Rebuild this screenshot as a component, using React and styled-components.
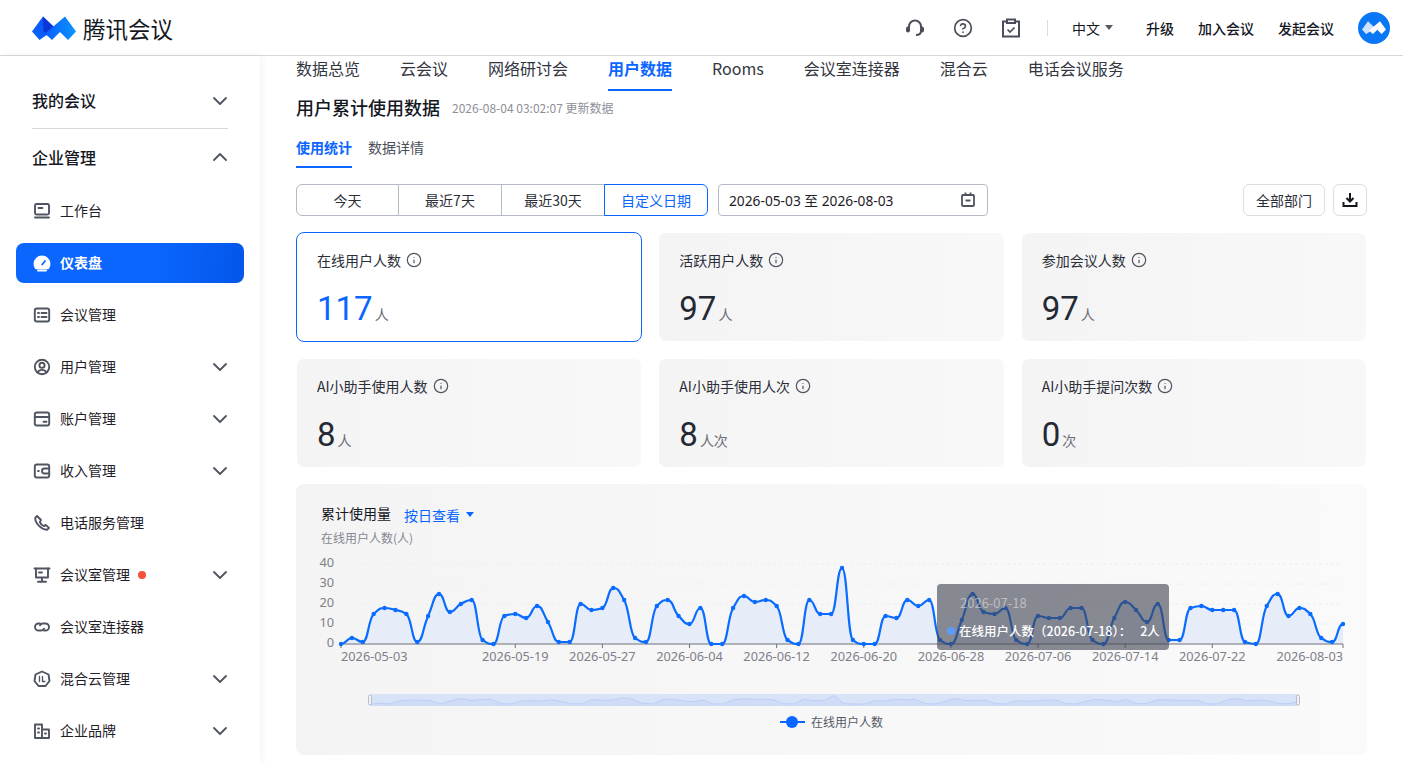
import React from "react";
import styled, { createGlobalStyle } from "styled-components";
import { ChevronDown, ChevronUp, CircleHelp, Info } from "lucide-react";

const GlobalStyle = createGlobalStyle`
  html, body { margin: 0; padding: 0; height: 100%; overflow: hidden; background: #fff; }
  body { font-family: "Noto Sans CJK SC", "Noto Sans", sans-serif; color: #15171f; }
  * { box-sizing: border-box; }
`;

const TOP_TABS = ["数据总览", "云会议", "网络研讨会", "用户数据", "Rooms", "会议室连接器", "混合云", "电话会议服务"];
const RANGES = ["今天", "最近7天", "最近30天", "自定义日期"];
const STATS = [
  { title: "在线用户人数", value: "117", unit: "人", active: true },
  { title: "活跃用户人数", value: "97", unit: "人" },
  { title: "参加会议人数", value: "97", unit: "人" },
  { title: "AI小助手使用人数", value: "8", unit: "人" },
  { title: "AI小助手使用人次", value: "8", unit: "人次" },
  { title: "AI小助手提问次数", value: "0", unit: "次" },
];
const MENU = [
  { icon: "desk", label: "工作台" },
  { icon: "gauge", label: "仪表盘", active: true },
  { icon: "list", label: "会议管理" },
  { icon: "user", label: "用户管理", more: true },
  { icon: "card", label: "账户管理", more: true },
  { icon: "wallet", label: "收入管理", more: true },
  { icon: "phone", label: "电话服务管理" },
  { icon: "room", label: "会议室管理", more: true, dot: true },
  { icon: "link", label: "会议室连接器" },
  { icon: "hybrid", label: "混合云管理", more: true },
  { icon: "brand", label: "企业品牌", more: true },
];

// daily values read off the chart, 05-03 to 08-03
const DATA = [
  0, 3, 1, 15, 18, 17, 15, 1, 14, 25, 16, 20, 22, 2, 0, 14, 15, 13, 19, 11, 1, 1, 20, 17, 18, 28, 22, 3, 1, 19, 22,
  14, 10, 18, 0, 0, 18, 24, 21, 22, 19, 2, 0, 22, 15, 15, 38, 2, 0, 0, 14, 13, 22, 19, 22, 2, 0, 12, 25, 16, 15, 18,
  2, 0, 14, 13, 13, 18, 18, 2, 0, 13, 21, 17, 11, 20, 2, 2, 18, 19, 17, 17, 17, 1, 0, 19, 25, 14, 18, 15, 3, 1, 10,
];
const X_TICKS = [
  [0, "2026-05-03"], [16, "2026-05-19"], [24, "2026-05-27"], [32, "2026-06-04"], [40, "2026-06-12"],
  [48, "2026-06-20"], [56, "2026-06-28"], [64, "2026-07-06"], [72, "2026-07-14"], [80, "2026-07-22"], [92, "2026-08-03"],
];

// monotone cubic through the points, so peaks stay on the data
function smoothPath(pts) {
  const slopes = pts.map((p, i) => {
    if (i === 0 || i === pts.length - 1) return 0;
    const a = (p[1] - pts[i - 1][1]) / (p[0] - pts[i - 1][0]);
    const b = (pts[i + 1][1] - p[1]) / (pts[i + 1][0] - p[0]);
    if (a * b <= 0) return 0;
    return (2 * a * b) / (a + b);
  });
  let d = `M${pts[0][0]} ${pts[0][1]}`;
  for (let i = 1; i < pts.length; i++) {
    const [x0, y0] = pts[i - 1];
    const [x1, y1] = pts[i];
    const h = (x1 - x0) / 2;
    d += `C${(x0 + h).toFixed(2)} ${(y0 + slopes[i - 1] * h).toFixed(2)} ${(x1 - h).toFixed(2)} ${(y1 - slopes[i] * h).toFixed(2)} ${x1.toFixed(2)} ${y1}`;
  }
  return d;
}

function Chart() {
  const left = 45;
  const step = 1002 / 92;
  const base = 103;
  const pts = DATA.map((v, i) => [left + i * step, base - v * 2]);
  const line = smoothPath(pts);
  return (
    <ChartSvg width="1071" height="126" viewBox="0 0 1071 126">
      {[10, 20, 30, 40].map((v) => (
        <line key={v} x1={left} x2={left + 1002} y1={base - v * 2} y2={base - v * 2} stroke="#eceef8" strokeDasharray="3 3" />
      ))}
      {[0, 10, 20, 30, 40].map((v) => (
        <text key={v} x="38" y={base - v * 2 + 3} textAnchor="end" fontSize="12.75" fill="#7e8088">{v}</text>
      ))}
      <path d={`${line}L${left + 1002} ${base}L${left} ${base}Z`} fill="#e6edf9" />
      <line x1={left} x2={left + 1002} y1={base} y2={base} stroke="#6e7079" />
      {X_TICKS.map(([d, label], i) => (
        <g key={label}>
          <line x1={left + d * step} x2={left + d * step} y1={base} y2={base + 4} stroke="#6e7079" />
          <text
            x={left + d * step}
            y={base + 17}
            textAnchor={i === 0 ? "start" : i === X_TICKS.length - 1 ? "end" : "middle"}
            fontSize="12.75"
            fill="#7e8088"
          >
            {label}
          </text>
        </g>
      ))}
      <path d={line} fill="none" stroke="#0a6cff" strokeWidth="2.2" />
      {pts.map((p, i) => (
        <circle key={i} cx={p[0]} cy={p[1]} r="2.2" fill="#0a6cff" />
      ))}
    </ChartSvg>
  );
}

function Brush() {
  const w = 928;
  const step = w / 92;
  const pts = DATA.map((v, i) => [i * step, 11 - v * 0.22]);
  const d = pts.map((p, i) => `${i ? "L" : "M"}${p[0].toFixed(1)} ${p[1].toFixed(1)}`).join("");
  return (
    <BrushSvg width="934" height="16" viewBox="-3 0 934 16">
      <rect x="0" y="1" width={w} height="12" fill="#d9e3f8" />
      <path d={`${d}L${w} 13L0 13Z`} fill="#cfdcf7" />
      <path d={d} fill="none" stroke="#bccff5" />
      <rect x="-1.5" y="2" width="3" height="10" rx="1.5" fill="#f0f2f7" stroke="#b9bdc8" />
      <rect x={w - 1.5} y="2" width="3" height="10" rx="1.5" fill="#f0f2f7" stroke="#b9bdc8" />
    </BrushSvg>
  );
}

const ICON_PATHS = {
  desk: <><rect x="3" y="3" width="14" height="10.5" rx="1.5" /><path d="M6.5 7h4M3 16.5h14" /></>,
  gauge: <><path d="M2.5 11a7.5 7.5 0 0 1 15 0c0 1.6-.5 3-1.3 4.2H3.8A7.6 7.6 0 0 1 2.5 11Z" fill="currentColor" /><path d="M10.2 11.5 13 8" stroke="#0a66ff" strokeWidth="1.8" /><path d="M6 17.5h8" /></>,
  list: <><rect x="2.8" y="3.5" width="14.4" height="13" rx="2" /><path d="M6 8h1M9.5 8h5M6 12h1M9.5 12h5" /></>,
  user: <><circle cx="10" cy="10" r="7.2" /><circle cx="10" cy="8.3" r="2.6" /><path d="M5.5 15.5c1-1.8 2.6-2.6 4.5-2.6s3.5.8 4.5 2.6" /></>,
  card: <><rect x="2.8" y="3.5" width="14.4" height="13" rx="2" /><path d="M3 8h14M11.5 12.8h3" /></>,
  wallet: <><rect x="2.8" y="3.5" width="14.4" height="13" rx="2" /><path d="M17 7.5h-4.5a2.5 2.5 0 0 0 0 5H17" /><path d="M6 10h.8" /></>,
  phone: <path d="M5 3 3.3 4.7c-.6 5.3 6.5 12.6 12 12l1.7-1.8-3.3-3-1.9 1.2c-1.7-.7-3.4-2.5-4-4.2L9 7 5 3Z" />,
  room: <><path d="M2.5 3.5h15" /><path d="M4 3.5v9h12v-9M10 12.5v4M6 16.8h8M7 7.5h3" /></>,
  link: <><path d="M8 6.5H6.5a3.5 3.5 0 0 0 0 7H9a3.5 3.5 0 0 0 3-1.8" /><path d="M12 13.5h1.500a3.5 3.5 0 0 0 0-7H11a3.5 3.5 0 0 0-3 1.8" /></>,
  hybrid: <><path d="M10 2.5 16.5 5.500 17.5 12 13.5 17H6.500L2.500 12 3.500 5.500 10 2.500Z" /><path d="M7.500 7.500v5M10.500 7.500v5h2.500" strokeWidth="1.3" /></>,
  brand: <><path d="M3 17V3.500h7V17H3ZM10 8.500h7V17h-7M6 7.500h1M6 11.500h1M13 12.500h1" /></>,
};

function MenuIcon({ name }) {
  return (
    <svg width="20" height="20" viewBox="0 0 20 20" fill="none" stroke="currentColor" strokeWidth="1.9" strokeLinejoin="round" strokeLinecap="round">
      {ICON_PATHS[name]}
    </svg>
  );
}

function Logo({ size = 44, plain }) {
  const h = (size * 24) / 44;
  return (
    <svg width={size} height={h} viewBox="0 0 44 24">
      <defs>
        <linearGradient id="lg-a" x1="0" y1="1" x2="1" y2="0">
          <stop offset="0" stopColor="#0a66ff" />
          <stop offset="1" stopColor="#0a4ef0" />
        </linearGradient>
        <linearGradient id="lg-b" x1="0" y1="0" x2="1" y2="0">
          <stop offset="0" stopColor="#0a5cff" />
          <stop offset="1" stopColor="#0a96ff" />
        </linearGradient>
      </defs>
      <polygon points="11,.5 23,12 14,19.5 7.5,24 0,15.5" fill={plain ? "#cfe2ff" : "url(#lg-a)"} />
      {!plain && <polygon points="11,.5 23,12 15,19.5 11.5,15" fill="#0b35d8" />}
      <polygon points="33,.5 44,15.5 36,24 28,16 20,24 13,17.5" fill={plain ? "#fff" : "url(#lg-b)"} />
    </svg>
  );
}

function Headset() {
  return (
    <svg width="20" height="20" viewBox="0 0 20 20" fill="none" stroke="#4a4e5a" strokeWidth="2">
      <path d="M4 10V8.5a6 6 0 0 1 12 0V10M16 13c0 2.500-1.500 4-5 4" />
      <rect x="1" y="8.5" width="4" height="6" rx="2" fill="#4a4e5a" stroke="none" />
      <rect x="15" y="8.5" width="4" height="6" rx="2" fill="#4a4e5a" stroke="none" />
    </svg>
  );
}

function ClipboardTick() {
  return (
    <svg width="20" height="20" viewBox="0 0 20 20" fill="none" stroke="#4a4e5a" strokeWidth="2">
      <path d="M6 3.5H2v15h16v-15h-4" />
      <rect x="6" y="1.5" width="8" height="3.5" />
      <path d="m6.5 11.5 2.500 2.500 4.500-4.500" strokeWidth="1.7" />
    </svg>
  );
}

export default function App() {
  return (
    <>
      <GlobalStyle />
      <Page>
        <Header>
          <Brand>
            <Logo />
            <BrandName>腾讯会议</BrandName>
          </Brand>
          <HeaderRight>
            <HeaderIcons>
              <Headset />
              <CircleHelp size={20} color="#4a4e5a" strokeWidth={2} />
              <ClipboardTick />
            </HeaderIcons>
            <VLine />
            <Lang>中文<Caret $color="#555964" /></Lang>
            <HeaderLink>升级</HeaderLink>
            <HeaderLink>加入会议</HeaderLink>
            <HeaderLink>发起会议</HeaderLink>
            <Avatar><Logo size={24} plain /></Avatar>
          </HeaderRight>
        </Header>
        <Body>
          <Sidebar>
            <SectionRow>
              <SectionLabel $raised>我的会议</SectionLabel>
              <ChevronDown size={24} color="#4f5461" strokeWidth={1.8} />
            </SectionRow>
            <SideRule />
            <SectionRow $second>
              <SectionLabel>企业管理</SectionLabel>
              <ChevronUp size={24} color="#4f5461" strokeWidth={1.8} />
            </SectionRow>
            <MenuList>
              {MENU.map((m) => (
                <MenuItem key={m.label} $active={m.active}>
                  <MenuIcon name={m.icon} />
                  <MenuLabel $active={m.active}>{m.label}</MenuLabel>
                  {m.dot && <RedDot />}
                  {m.more && <MoreIcon><ChevronDown size={24} color="#4f5461" strokeWidth={1.8} /></MoreIcon>}
                </MenuItem>
              ))}
            </MenuList>
          </Sidebar>
          <Main>
            <TopTabs>
              {TOP_TABS.map((t) => (
                <TopTab key={t} $active={t === "用户数据"}>{t}</TopTab>
              ))}
            </TopTabs>
            <TitleRow>
              <Title>用户累计使用数据</Title>
              <Updated>2026-08-04 03:02:07 更新数据</Updated>
            </TitleRow>
            <SubTabs>
              <SubTab $active>使用统计</SubTab>
              <SubTab>数据详情</SubTab>
            </SubTabs>
            <Toolbar>
              <Segments>
                {RANGES.map((r, i) => (
                  <Segment key={r} $active={i === 3}>{r}</Segment>
                ))}
              </Segments>
              <DateBox>
                2026-05-03 至 2026-08-03
                <svg width="16" height="16" viewBox="0 0 16 16" fill="none" stroke="#4f5461" strokeWidth="1.8">
                  <rect x="2" y="3" width="12" height="11" rx="1" />
                  <path d="M5.5 .5V4M10.5 .5V4M5.5 8.5h5" />
                </svg>
              </DateBox>
              <ToolSpacer />
              <GhostButton>全部部门</GhostButton>
              <IconButton>
                <svg width="16" height="16" viewBox="0 0 16 16" fill="none" stroke="#15171f" strokeWidth="2">
                  <path d="M8 1v8M4.5 6 8 9.5 11.5 6M1.5 10v4h13v-4" />
                </svg>
              </IconButton>
            </Toolbar>
            <StatGrid>
              {STATS.map((s) => (
                <StatCard key={s.title} $active={s.active}>
                  <StatTitle>
                    {s.title}
                    <Info size={16} color="#4f5461" strokeWidth={1.8} />
                  </StatTitle>
                  <StatValue>
                    <StatNumber $active={s.active}>{s.value}</StatNumber>
                    <StatUnit>{s.unit}</StatUnit>
                  </StatValue>
                </StatCard>
              ))}
            </StatGrid>
            <ChartCard>
              <ChartHead>
                <ChartTitle>累计使用量</ChartTitle>
                <ChartMode>按日查看<Caret $color="#0a66ff" /></ChartMode>
              </ChartHead>
              <AxisName>在线用户人数(人)</AxisName>
              <Chart />
              <Tooltip>
                <TooltipDate>2026-07-18</TooltipDate>
                <TooltipRow>
                  <TooltipDot />
                  <span>在线用户人数（2026-07-18）：</span>
                  <TooltipValue>2人</TooltipValue>
                </TooltipRow>
              </Tooltip>
              <Brush />
              <Legend>
                <LegendMark />
                在线用户人数
              </Legend>
            </ChartCard>
          </Main>
        </Body>
      </Page>
    </>
  );
}

const Page = styled.div`
  width: 1403px;
  height: 764px;
  overflow: hidden;
  display: flex;
  flex-direction: column;
`;

const Header = styled.header`
  height: 56px;
  flex: none;
  display: flex;
  align-items: center;
  justify-content: space-between;
  padding: 0 13px 0 32px;
  border-bottom: 1px solid #d6d6d8;
`;

const Brand = styled.div`
  display: flex;
  align-items: center;
  gap: 7px;
`;

const BrandName = styled.span`
  font-size: 22.5px;
  line-height: 30px;
  color: #15171f;
`;

const HeaderRight = styled.div`
  display: flex;
  align-items: center;
`;

const HeaderIcons = styled.div`
  display: flex;
  align-items: center;
  gap: 28px;
`;

const VLine = styled.span`
  width: 1px;
  height: 16px;
  background: #dcdde0;
  margin: 0 24px 0 26px;
`;

const Lang = styled.span`
  display: flex;
  align-items: center;
  gap: 5px;
  font-size: 14px;
  margin-right: 33px;
`;

const Caret = styled.i`
  display: inline-block;
  width: 0;
  height: 0;
  border-left: 4.5px solid transparent;
  border-right: 4.5px solid transparent;
  border-top: 5px solid ${({ $color }) => $color};
`;

const HeaderLink = styled.span`
  font-size: 14px;
  font-weight: 500;
  margin-right: 24px;
  color: #15171f;
`;

const Avatar = styled.span`
  width: 32px;
  height: 32px;
  border-radius: 50%;
  background: #0a78f5;
  display: flex;
  align-items: center;
  justify-content: center;
`;

const Body = styled.div`
  flex: 1;
  display: flex;
  min-height: 0;
`;

const Sidebar = styled.aside`
  width: 260px;
  flex: none;
  padding: 25px 16px 0;
  box-shadow: 2px 0 8px rgba(20, 30, 60, 0.05);
  overflow: hidden;
`;

const SectionRow = styled.div`
  height: 40px;
  display: flex;
  align-items: center;
  justify-content: space-between;
  padding: 0 12px 0 16px;
  margin-top: ${({ $second }) => ($second ? "8px" : "0")};
`;

const SectionLabel = styled.span`
  font-size: 16px;
  font-weight: 500;
  padding-bottom: ${({ $raised }) => ($raised ? "2px" : "0")};
`;

const SideRule = styled.div`
  height: 1px;
  margin: 7px 16px 0;
  background: #d5d7dd;
`;

const MenuList = styled.div`
  display: flex;
  flex-direction: column;
  gap: 12px;
  margin-top: 14px;
`;

const MenuItem = styled.div`
  height: 40px;
  flex: none;
  display: flex;
  align-items: center;
  gap: 8px;
  padding: 0 12px 0 16px;
  border-radius: 8px;
  font-size: 14px;
  color: ${({ $active }) => ($active ? "#fff" : "#4f5461")};
  background: ${({ $active }) => ($active ? "linear-gradient(95deg, #0a66ff 60%, #0556ea)" : "none")};
`;

const MenuLabel = styled.span`
  padding-bottom: 2px;
  color: ${({ $active }) => ($active ? "#fff" : "#1f2129")};
  font-weight: ${({ $active }) => ($active ? 700 : 400)};
`;

const RedDot = styled.i`
  width: 8px;
  height: 8px;
  border-radius: 50%;
  background: #f5503c;
`;

const MoreIcon = styled.span`
  margin-left: auto;
  display: flex;
`;

const Main = styled.main`
  flex: 1;
  min-width: 0;
  padding: 0 36px;
`;

const TopTabs = styled.nav`
  display: flex;
  gap: 40px;
  height: 35px;
`;

const TopTab = styled.span`
  height: 35px;
  line-height: 24px;
  font-size: 16px;
  color: ${({ $active }) => ($active ? "#0a66ff" : "#33363f")};
  font-weight: ${({ $active }) => ($active ? 700 : 400)};
  border-bottom: 2px solid ${({ $active }) => ($active ? "#0a66ff" : "transparent")};
`;

const TitleRow = styled.div`
  display: flex;
  align-items: center;
  gap: 12px;
  margin-top: 3px;
  height: 26px;
`;

const Title = styled.h1`
  margin: 0;
  font-size: 18px;
  font-weight: 500;
  color: #15171f;
`;

const Updated = styled.span`
  font-size: 12px;
  color: #8e9098;
`;

const SubTabs = styled.div`
  display: flex;
  gap: 16px;
  margin-top: 15px;
  height: 33px;
`;

const SubTab = styled.span`
  height: 33px;
  line-height: 24px;
  font-size: 14px;
  color: ${({ $active }) => ($active ? "#0a66ff" : "#4a4e5a")};
  font-weight: ${({ $active }) => ($active ? 700 : 400)};
  border-bottom: 2px solid ${({ $active }) => ($active ? "#0a66ff" : "transparent")};
`;

const Toolbar = styled.div`
  display: flex;
  align-items: center;
  margin-top: 16px;
`;

const Segments = styled.div`
  display: flex;
  width: 412px;
`;

const Segment = styled.span`
  width: ${({ $active }) => ($active ? "104px" : "103px")};
  margin-left: ${({ $active }) => ($active ? "-1px" : "0")};
  height: 32px;
  display: flex;
  align-items: center;
  justify-content: center;
  font-size: 14px;
  color: ${({ $active }) => ($active ? "#0a66ff" : "#2b2e37")};
  border: 1px solid ${({ $active }) => ($active ? "#0a66ff" : "#b4b9c6")};
  border-left-width: ${({ $active }) => ($active ? "1px" : "0")};
  &:first-child { border-radius: 6px 0 0 6px; border-left-width: 1px; }
  &:last-child { border-radius: 0 6px 6px 0; }
`;

const DateBox = styled.div`
  width: 270px;
  height: 32px;
  margin-left: 10px;
  padding: 0 11px 0 10px;
  display: flex;
  align-items: center;
  justify-content: space-between;
  border: 1px solid #b4b9c6;
  border-radius: 4px;
  font-family: "Noto Sans", "Noto Sans CJK SC", sans-serif;
  font-size: 13.75px;
  color: #1f2129;
`;

const ToolSpacer = styled.span`
  flex: 1;
`;

const GhostButton = styled.span`
  width: 82px;
  height: 32px;
  display: flex;
  align-items: center;
  justify-content: center;
  border: 1px solid #dcdee3;
  border-radius: 6px;
  font-size: 14px;
  color: #2b2e37;
`;

const IconButton = styled.span`
  width: 34px;
  height: 32px;
  margin-left: 8px;
  display: flex;
  align-items: center;
  justify-content: center;
  border: 1px solid #dcdee3;
  border-radius: 6px;
`;

const StatGrid = styled.div`
  display: grid;
  grid-template-columns: repeat(3, 1fr);
  grid-auto-rows: 110px;
  gap: 16px;
  margin-top: 16px;
`;

const StatCard = styled.div`
  padding: 15px 20px;
  border-radius: 8px;
  background: ${({ $active }) => ($active ? "#fff" : "linear-gradient(90deg, #f4f4f5, #f8f8f9)")};
  background-clip: padding-box;
  border: 1px solid ${({ $active }) => ($active ? "#0a66ff" : "transparent")};
`;

const StatTitle = styled.div`
  display: flex;
  align-items: center;
  gap: 5px;
  height: 24px;
  font-size: 14px;
  color: #2b2e37;
`;

const StatValue = styled.div`
  display: flex;
  align-items: baseline;
  gap: 2px;
  margin-top: 15px;
`;

const StatNumber = styled.span`
  font-family: Roboto, "Noto Sans", sans-serif;
  font-size: 33px;
  line-height: 44px;
  font-weight: 400;
  color: ${({ $active }) => ($active ? "#0a66ff" : "#242933")};
`;

const StatUnit = styled.span`
  font-size: 14px;
  color: #6a6d76;
`;

const ChartCard = styled.section`
  position: relative;
  height: 271px;
  margin-top: 16px;
  border-radius: 8px;
  background: linear-gradient(90deg, #f4f4f5, #fafafb);
  padding-top: 18px;
`;

const ChartHead = styled.div`
  display: flex;
  align-items: center;
  padding-left: 25px;
  gap: 13px;
  height: 24px;
`;

const ChartTitle = styled.span`
  font-size: 14px;
  color: #15171f;
  padding-bottom: 2px;
`;

const ChartMode = styled.span`
  display: flex;
  align-items: center;
  gap: 6px;
  font-size: 14px;
  color: #0a66ff;
  padding-top: 1px;
`;

const AxisName = styled.div`
  padding-left: 25px;
  font-size: 12px;
  line-height: 18px;
  margin-top: 3px;
  color: #85878f;
`;

const ChartSvg = styled.svg`
  display: block;
  margin-top: -6px;
  font-family: "Noto Sans", sans-serif;
`;

const Tooltip = styled.div`
  position: absolute;
  left: 641px;
  top: 100px;
  width: 232px;
  height: 66px;
  padding: 10px;
  border-radius: 4px;
  background: rgba(66, 70, 82, 0.62);
  color: #fff;
  font-size: 12.5px;
`;

const TooltipDate = styled.div`
  padding-left: 13px;
  font-size: 13px;
  color: rgba(255, 255, 255, 0.45);
  line-height: 18px;
`;

const TooltipRow = styled.div`
  display: flex;
  align-items: center;
  margin-top: 10px;
  line-height: 18px;
  font-weight: 500;
  white-space: nowrap;
`;

const TooltipDot = styled.i`
  width: 8px;
  height: 8px;
  flex: none;
  border-radius: 50%;
  background: #5a9bff;
  margin-right: 4px;
`;

const TooltipValue = styled.span`
  margin-left: 9px;
`;

const BrushSvg = styled.svg`
  display: block;
  margin: 26px 0 0 71px;
`;

const Legend = styled.div`
  display: flex;
  align-items: center;
  justify-content: center;
  gap: 6px;
  margin-top: 4px;
  font-size: 12px;
  line-height: 18px;
  color: #555964;
`;

const LegendMark = styled.i`
  position: relative;
  width: 25px;
  height: 2px;
  background: #0a66ff;
  &::after {
    content: "";
    position: absolute;
    left: 6px;
    top: -5px;
    width: 12px;
    height: 12px;
    border-radius: 50%;
    background: #0a66ff;
  }
`;
